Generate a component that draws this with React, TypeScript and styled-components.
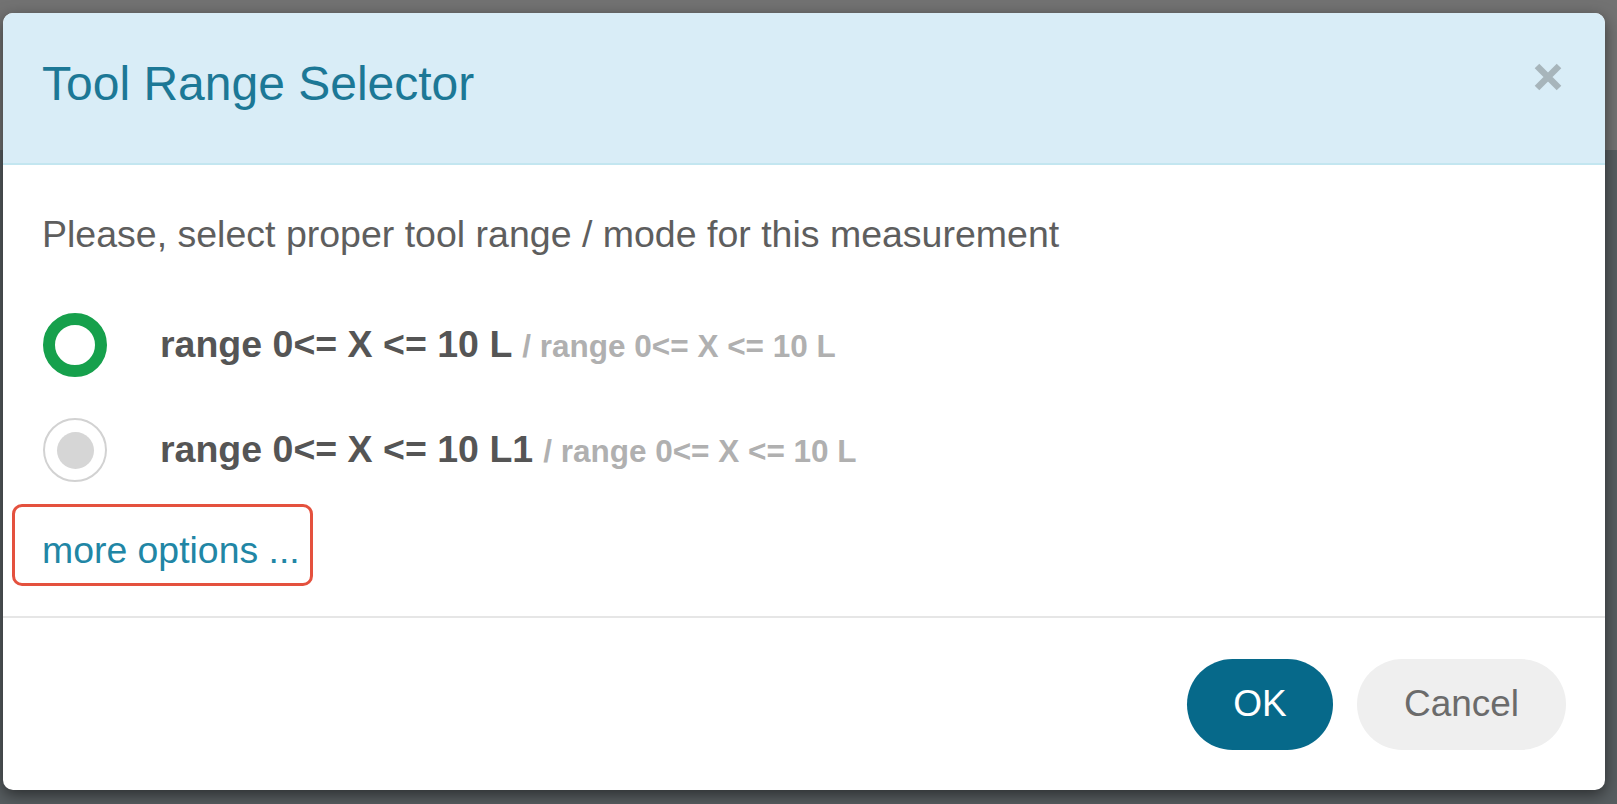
import React, { useState } from "react";
import styled, { createGlobalStyle } from "styled-components";

const GlobalStyle = createGlobalStyle`
  html, body {
    margin: 0;
    padding: 0;
    background: linear-gradient(to bottom, #727272 0, #727272 150px, #575d60 150px, #575d60 100%);
    font-family: "Liberation Sans", Arial, sans-serif;
  }
  * { box-sizing: border-box; }
`;

const Backdrop = styled.div`
  width: 1617px;
  height: 804px;
  padding: 13px 12px 14px 3px;
`;

const Modal = styled.div`
  width: 1602px;
  height: 777px;
  background: #ffffff;
  border-radius: 10px;
  overflow: hidden;
  box-shadow: 0 5px 15px rgba(0, 0, 0, 0.5);
  display: flex;
  flex-direction: column;
`;

const Header = styled.div`
  height: 152px;
  flex: none;
  background: #d9edf7;
  border-bottom: 2px solid #c3e6f0;
  display: flex;
  align-items: center;
  justify-content: space-between;
  padding: 0 43px 7px 39px;
`;

const Title = styled.h4`
  margin: 0;
  font-size: 48px;
  line-height: 1.1;
  font-weight: 400;
  color: #1c7896;
`;

const Close = styled.button`
  align-self: flex-start;
  margin-top: 50px;
  width: 28px;
  height: 28px;
  padding: 0;
  border: 0;
  background: transparent;
  cursor: pointer;
  display: flex;
`;

const Body = styled.div`
  flex: none;
  padding: 44px 39px 30px;
`;

const Description = styled.p`
  margin: 0;
  font-size: 37.5px;
  line-height: 50px;
  color: #5e5e5e;
  white-space: nowrap;
`;

const Options = styled.div`
  margin-top: 46px;
  display: flex;
  flex-direction: column;
  gap: 25px;
`;

const OptionRow = styled.label`
  height: 80px;
  display: flex;
  align-items: center;
  gap: 53px;
  padding-left: 1px;
  cursor: pointer;
`;

const Radio = styled.span<{ $checked: boolean }>`
  flex: none;
  width: 64px;
  height: 64px;
  border-radius: 50%;
  display: flex;
  align-items: center;
  justify-content: center;
  border: ${(p) => (p.$checked ? "12px solid #16a04c" : "2px solid #d2d2d2")};
  background: #fff;
  &::after {
    content: "";
    display: ${(p) => (p.$checked ? "none" : "block")};
    width: 37px;
    height: 37px;
    border-radius: 50%;
    background: #d6d6d6;
  }
`;

const LabelText = styled.span`
  font-size: 37.5px;
  line-height: 1.15;
  font-weight: 700;
  color: #555555;
  white-space: nowrap;
`;

const SubText = styled.span`
  font-size: 31.5px;
  font-weight: 700;
  color: #b0b0b0;
  margin-left: 10px;
`;

const Highlight = styled.div`
  margin-top: 14px;
  margin-left: -30px;
  width: 301px;
  height: 82px;
  border: 3px solid #e4513e;
  border-radius: 10px;
  padding: 18px 0 0 27px;
`;

const MoreLink = styled.a`
  font-size: 37.4px;
  line-height: 50px;
  color: #2186a5;
  text-decoration: none;
  white-space: nowrap;
  cursor: pointer;
`;

const Footer = styled.div`
  flex: 1;
  border-top: 2px solid #e6e6e6;
  display: flex;
  align-items: center;
  justify-content: flex-end;
  gap: 24px;
  padding: 0 39px 0 0;
`;

const Button = styled.button<{ $primary?: boolean }>`
  height: 91px;
  width: ${(p) => (p.$primary ? "146px" : "209px")};
  border: 0;
  border-radius: 46px;
  font-family: "Liberation Sans", Arial, sans-serif;
  font-size: 37px;
  background: ${(p) => (p.$primary ? "#06698a" : "#efefef")};
  color: ${(p) => (p.$primary ? "#ffffff" : "#6b6b6b")};
  cursor: pointer;
`;

const options = [
  { main: "range 0<= X <= 10 L", sub: "/ range 0<= X <= 10 L" },
  { main: "range 0<= X <= 10 L1", sub: "/ range 0<= X <= 10 L" },
];

export default function App() {
  const [selected, setSelected] = useState(0);
  return (
    <>
      <GlobalStyle />
      <Backdrop>
        <Modal>
          <Header>
            <Title>Tool Range Selector</Title>
            <Close aria-label="Close">
              <svg width="28" height="28" viewBox="0 0 28 28">
                <path d="M3 3 L25 25 M25 3 L3 25" stroke="#a7b5bb" strokeWidth="6.5" />
              </svg>
            </Close>
          </Header>
          <Body>
            <Description>Please, select proper tool range / mode for this measurement</Description>
            <Options>
              {options.map((o, i) => (
                <OptionRow key={i} onClick={() => setSelected(i)}>
                  <Radio $checked={selected === i} />
                  <LabelText>
                    {o.main}
                    <SubText>{o.sub}</SubText>
                  </LabelText>
                </OptionRow>
              ))}
            </Options>
            <Highlight>
              <MoreLink>more options ...</MoreLink>
            </Highlight>
          </Body>
          <Footer>
            <Button $primary>OK</Button>
            <Button>Cancel</Button>
          </Footer>
        </Modal>
      </Backdrop>
    </>
  );
}
